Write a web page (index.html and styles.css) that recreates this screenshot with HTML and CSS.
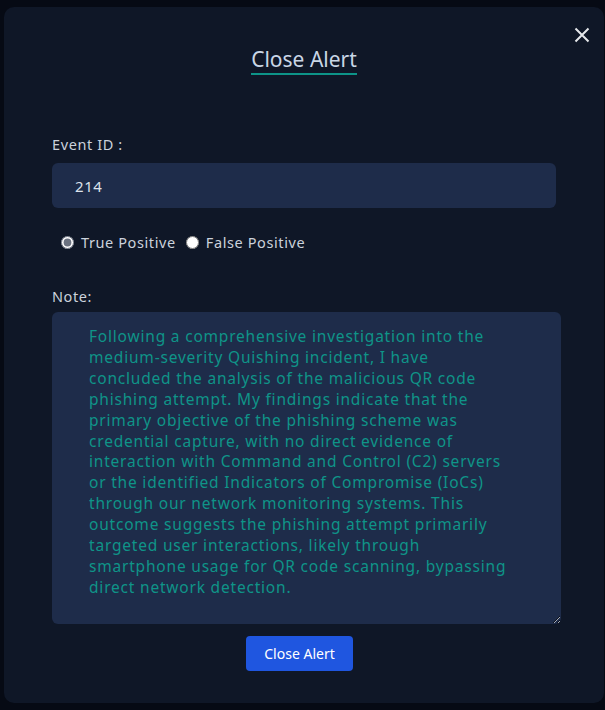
FILE: index.html
```html
<!DOCTYPE html>
<html lang="en">
<head>
  <meta charset="UTF-8" />
  <meta name="viewport" content="width=device-width, initial-scale=1.0"/>
  <title>Close Alert</title>
  <link rel="stylesheet" href="styles.css">
</head>
<body>
  <div class="modal">
    <button class="close-x" type="button" aria-label="Close">
      <svg width="16" height="16" viewBox="0 0 16 16">
        <path d="M1.5 1.5 L14.5 14.5 M14.5 1.5 L1.5 14.5" stroke="#e5e7eb" stroke-width="2" fill="none"/>
      </svg>
    </button>

    <h2 class="title">Close Alert</h2>

    <form class="alert-form" onsubmit="event.preventDefault();">
      <label for="eventId">Event ID :</label>
      <input type="text" id="eventId" value="214" />

      <div class="radios">
        <label><input type="radio" name="verdict" checked /> True Positive</label>
        <label><input type="radio" name="verdict" /> False Positive</label>
      </div>

      <label for="note">Note:</label>
      <textarea id="note" spellcheck="false">Following a comprehensive investigation into the
medium-severity Quishing incident, I have
concluded the analysis of the malicious QR code
phishing attempt. My findings indicate that the
primary objective of the phishing scheme was
credential capture, with no direct evidence of
interaction with Command and Control (C2) servers
or the identified Indicators of Compromise (IoCs)
through our network monitoring systems. This
outcome suggests the phishing attempt primarily
targeted user interactions, likely through
smartphone usage for QR code scanning, bypassing
direct network detection.</textarea>

      <button type="submit" class="submit">Close Alert</button>
    </form>
  </div>
</body>
</html>
```

FILE: styles.css
```css
html, body {
  margin: 0;
  background: #060a14;
}
body {
  font-family: "Noto Sans", "Open Sans", sans-serif;
  padding: 7px 1px 7px 4px;
}
.modal {
  position: relative;
  height: 696px;
  box-sizing: border-box;
  background: #0f1727;
  border-radius: 10px;
  padding: 38px 48px 0 48px;
}
.close-x {
  position: absolute;
  top: 20px;
  right: 14px;
  background: none;
  border: none;
  padding: 0;
  cursor: pointer;
}
.title {
  margin: 0 auto;
  width: fit-content;
  font-size: 21px;
  font-weight: 400;
  color: #c9d6e6;
  border-bottom: 2px solid #0d9488;
  line-height: 28px;
}
.alert-form {
  display: flex;
  flex-direction: column;
  margin-top: 59px;
}
.alert-form > label {
  font-size: 14.5px;
  letter-spacing: 0.6px;
  color: #cbd2dc;
  margin-bottom: 8px;
}
#eventId {
  height: 45px;
  box-sizing: border-box;
  margin-top: 1px;
  background: #1e2c4a;
  border: none;
  border-radius: 6px;
  padding: 0 23px;
  font-family: inherit;
  font-size: 15px;
  letter-spacing: 0.6px;
  color: #dde3ec;
  outline: none;
}
.radios {
  display: flex;
  gap: 10px;
  margin: 24px 0 34px 9px;
  font-size: 14.5px;
  letter-spacing: 0.6px;
  color: #cbd2dc;
}
.radios label {
  display: flex;
  align-items: center;
  gap: 7px;
}
.radios input {
  margin: 0;
  width: 13px;
  height: 13px;
  accent-color: #6b7280;
}
#note {
  width: 509px;
  height: 312px;
  box-sizing: border-box;
  margin-top: -2px;
  background: #1e2c4a;
  border: none;
  border-radius: 6px;
  padding: 14px 20px 10px 37px;
  font-family: inherit;
  font-size: 15.5px;
  line-height: 20.9px;
  letter-spacing: 0.8px;
  color: #0f9488;
  outline: none;
  white-space: pre;
  overflow: hidden;
}
.submit {
  align-self: center;
  margin-top: 12px;
  margin-left: -9px;
  padding: 0 18px;
  height: 35px;
  background: #1f56e0;
  border: none;
  border-radius: 4px;
  color: #ffffff;
  font-family: inherit;
  font-size: 14px;
  cursor: pointer;
}
```
